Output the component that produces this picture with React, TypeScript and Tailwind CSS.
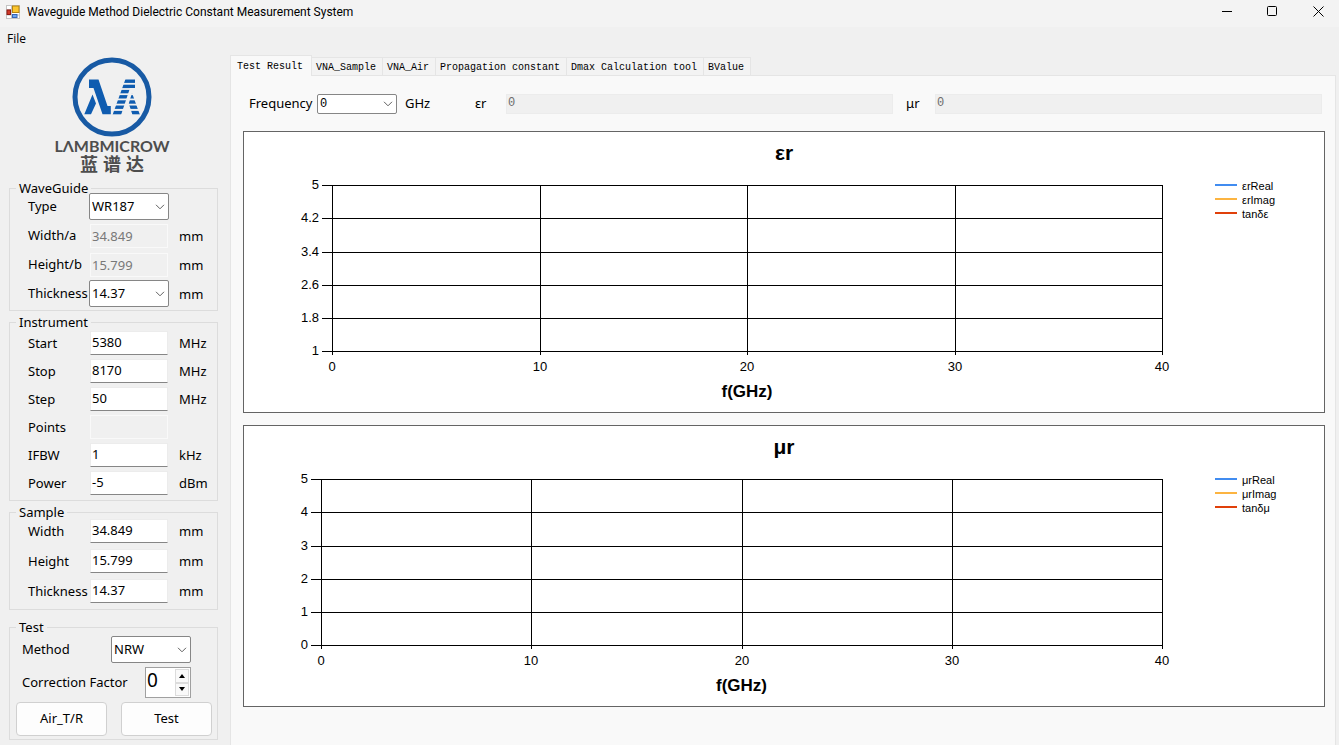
import React from "react";
import type { ReactNode } from "react";

const stripes = [79.5, 84.7, 89.9, 95.1, 100.3, 105.5, 110.9];

function Logo() {
  return (
    <div className="flex flex-col items-center text-[#4d4d4d]">
      <svg width="80" height="80" viewBox="72 57 80 80" role="img" aria-label="Lambmicrow">
        <defs>
          <clipPath id="right-mark">
            <path d="M125.5 79H135V88H130L121 115H112.5Z M132 93L140 115H132.5L128.8 103.5Z" />
          </clipPath>
        </defs>
        <circle cx="112" cy="97" r="37" fill="none" stroke="#185aa4" strokeWidth="5" />
        <path
          d="M89 79.5H98.5L107.5 106H110.8V114.3H102.5L93.5 88H89Z M92.5 94.5L96 103.5L91 114.3H84.3Z"
          fill="#0f5cb0"
        />
        <g clipPath="url(#right-mark)" fill="#0f5cb0">
          {stripes.map((y) => (
            <rect key={y} x="110" y={y} width="32" height="3.4" />
          ))}
        </g>
      </svg>
      <div className="font-['Lato'] text-[16px] font-bold leading-[18px]">LΛMBMICROW</div>
      <div className="mt-px flex gap-[5px] font-['Liberation_Sans','Noto_Sans_CJK_SC',sans-serif] text-[18px] font-bold leading-[18px]">
        <span>蓝</span>
        <span>谱</span>
        <span>达</span>
      </div>
    </div>
  );
}

function Group({ title, className, children }: { title: string; className: string; children: ReactNode }) {
  return (
    <fieldset className={`min-w-0 border border-[#dcdcdc] ${className}`}>
      <legend className="ml-[6px] px-[3px] text-[13px] leading-[8px]">{title}</legend>
      {children}
    </fieldset>
  );
}

function Combo({ id, value, className }: { id: string; value: string; className: string }) {
  return (
    <div className={`relative ${className}`}>
      <select
        id={id}
        defaultValue={value}
        className="h-full w-full appearance-none rounded-[2px] border border-[#868686] bg-white pl-[2px]"
      >
        <option>{value}</option>
      </select>
      <svg
        width="10"
        height="6"
        viewBox="0 0 10 6"
        className="pointer-events-none absolute right-1 top-1/2 -translate-y-1/2"
        aria-hidden="true"
      >
        <path d="M1 0.8L5 4.8L9 0.8" fill="none" stroke="#606060" />
      </svg>
    </div>
  );
}

type RowData = { label: string; value: string; unit?: string; kind?: "select" | "disabled" };

function Row({ group, row, className }: { group: string; row: RowData; className: string }) {
  const id = `${group}-${row.label.replace("/", "-")}`.toLowerCase();
  return (
    <div className={`grid grid-cols-[61px_80px_1fr] items-center pl-[18px] ${className}`}>
      <label htmlFor={id} className="whitespace-nowrap pt-px">
        {row.label}
      </label>
      {row.kind === "select" ? (
        <Combo id={id} value={row.value} className="h-[27px]" />
      ) : row.kind === "disabled" ? (
        <input
          id={id}
          disabled
          defaultValue={row.value}
          className="mx-px h-6 min-w-0 border border-[#f9f9f9] bg-[#f0f0f0] pl-px text-[#787878]"
        />
      ) : (
        <input
          id={id}
          defaultValue={row.value}
          className="mx-px h-6 min-w-0 border border-[#ececec] border-b-[#868686] bg-white pb-[2px] pl-px"
        />
      )}
      <span className="pl-[10px] pt-[2px]">{row.unit}</span>
    </div>
  );
}

const waveguide: RowData[] = [
  { label: "Type", value: "WR187", kind: "select" },
  { label: "Width/a", value: "34.849", unit: "mm", kind: "disabled" },
  { label: "Height/b", value: "15.799", unit: "mm", kind: "disabled" },
  { label: "Thickness", value: "14.37", unit: "mm", kind: "select" },
];

const instrument: RowData[] = [
  { label: "Start", value: "5380", unit: "MHz" },
  { label: "Stop", value: "8170", unit: "MHz" },
  { label: "Step", value: "50", unit: "MHz" },
  { label: "Points", value: "", kind: "disabled" },
  { label: "IFBW", value: "1", unit: "kHz" },
  { label: "Power", value: "-5", unit: "dBm" },
];

const sample: RowData[] = [
  { label: "Width", value: "34.849", unit: "mm" },
  { label: "Height", value: "15.799", unit: "mm" },
  { label: "Thickness", value: "14.37", unit: "mm" },
];

const buttonStyle = "h-[34px] rounded-[4px] border border-[#d0d0d0] bg-[#fdfdfd]";
const stepStyle = "flex flex-1 items-center justify-center border border-[#dcdcdc] bg-[#f9f9f9]";

function Sidebar() {
  return (
    <aside className="flex w-[230px] shrink-0 flex-col pl-[9px] pr-3 pt-[7px]">
      <div className="pr-[3px]">
        <Logo />
      </div>
      <Group title="WaveGuide" className="mt-[10px] pb-[2px]">
        {waveguide.map((row) => (
          <Row key={row.label} group="waveguide" row={row} className="h-[29px]" />
        ))}
      </Group>
      <Group title="Instrument" className="mt-[7px] pb-[3px] pt-[3px]">
        {instrument.map((row) => (
          <Row key={row.label} group="instrument" row={row} className="h-7" />
        ))}
      </Group>
      <Group title="Sample" className="mt-[7px] pb-[3px]">
        {sample.map((row) => (
          <Row key={row.label} group="sample" row={row} className="h-[30px]" />
        ))}
      </Group>
      <Group title="Test" className="mt-[13px] pb-[3px]">
        <div className="flex flex-col gap-1 pt-[5px]">
          <div className="flex items-center justify-between pl-3 pr-[26px]">
            <label htmlFor="method">Method</label>
            <Combo id="method" value="NRW" className="h-[27px] w-20" />
          </div>
          <div className="flex items-center justify-between pl-3 pr-[26px]">
            <label htmlFor="correction">Correction Factor</label>
            <div className="flex h-[31px] w-[46px] border border-[#a0a0a0] bg-white">
              <input id="correction" defaultValue="0" className="min-w-0 flex-1 pb-[5px] pl-px text-[19px]" />
              <div className="flex w-[15px] flex-col py-px pr-px">
                <button aria-label="Increase" className={stepStyle}>
                  <svg width="6" height="4" viewBox="0 0 6 4"><path d="M3 0L6 4H0Z" /></svg>
                </button>
                <button aria-label="Decrease" className={stepStyle}>
                  <svg width="6" height="4" viewBox="0 0 6 4"><path d="M3 4L0 0H6Z" /></svg>
                </button>
              </div>
            </div>
          </div>
          <div className="grid grid-cols-2 gap-[14px] pl-[6px] pr-[5px]">
            <button className={buttonStyle}>Air_T/R</button>
            <button className={buttonStyle}>Test</button>
          </div>
        </div>
      </Group>
    </aside>
  );
}

type ChartProps = { title: string; left: number; yLabels: string[]; legend: string[]; columns: number[] };

const right = 918;
const gridRows = [53, 86, 120, 153, 186, 219];
const legendColors = ["#418cf0", "#fcb441", "#e0400a"];

function Chart({ title, left, yLabels, legend, columns }: ChartProps) {
  const middle = (left + right) / 2;
  return (
    <figure className="border border-[#646464] bg-white">
      <svg viewBox="0 0 1080 280" className="block w-full font-['Liberation_Sans',sans-serif]" role="img" aria-label={title}>
        <text x="540" y="28" textAnchor="middle" fontSize="21" fontWeight="bold">
          {title}
        </text>
        <g fill="#000" shapeRendering="crispEdges">
          {gridRows.map((y) => (
            <rect key={y} x={left - 10} y={y} width={right - left + 11} height="1" />
          ))}
          {columns.map((x) => (
            <rect key={x} x={x} y="53" width="1" height="170" />
          ))}
        </g>
        <g fontSize="13" textAnchor="end">
          {gridRows.map((y, i) => (
            <text key={y} x={left - 13} y={y + 4}>
              {yLabels[i]}
            </text>
          ))}
        </g>
        <g fontSize="13" textAnchor="middle">
          {columns.map((x, i) => (
            <text key={x} x={x} y="239">
              {i * 10}
            </text>
          ))}
        </g>
        <text x={middle} y="265" textAnchor="middle" fontSize="17" fontWeight="bold">
          f(GHz)
        </text>
        {legend.map((name, i) => (
          <g key={name}>
            <rect x="971" y={52 + i * 14} width="22" height="2" fill={legendColors[i]} />
            <text x="998" y={58 + i * 14} fontSize="11">
              {name}
            </text>
          </g>
        ))}
      </svg>
    </figure>
  );
}

const tabs = ["VNA_Sample", "VNA_Air", "Propagation constant", "Dmax Calculation tool", "BValue"];
const readout =
  "h-5 min-w-0 flex-1 border border-[#ececec] bg-[#f0f0f0] pb-[2px] pl-px font-['Liberation_Mono',monospace] text-[12px] text-[#6d6d6d]";

function Results() {
  return (
    <main className="flex min-w-0 flex-1 flex-col pr-[3px] pt-[5px]">
      <div role="tablist" className="flex items-end font-['Liberation_Mono',monospace] text-[10px]">
        <button role="tab" aria-selected="true" className="relative z-10 -mb-px h-[21px] border border-b-0 border-[#e5e5e5] bg-[#f9f9f9] pl-[6px] pr-[8px]">
          Test Result
        </button>
        {tabs.map((tab) => (
          <button key={tab} role="tab" aria-selected="false" className="h-[18px] border border-b-0 border-l-0 border-[#e5e5e5] bg-[#f3f3f3] pl-1 pr-[6px] pt-px">
            {tab}
          </button>
        ))}
      </div>
      <section className="flex flex-1 flex-col border border-[#e5e5e5] bg-[#f9f9f9] pb-[38px] pl-3 pr-[10px] pt-[18px]">
        <div className="flex h-5 items-center pl-[6px] pr-[3px]">
          <label htmlFor="frequency" className="w-[68px]">
            Frequency
          </label>
          <Combo id="frequency" value="0" className="h-5 w-20 font-['Liberation_Mono',monospace] text-[12px]" />
          <span className="w-[78px] pl-2">GHz</span>
          <label htmlFor="epsilon" className="w-[31px]">
            εr
          </label>
          <input id="epsilon" disabled defaultValue="0" className={readout} />
          <label htmlFor="mu" className="w-[42px] pl-[13px]">
            μr
          </label>
          <input id="mu" disabled defaultValue="0" className={readout} />
        </div>
        <div className="mt-[17px] flex flex-col gap-3">
          <Chart
            title="εr"
            left={88}
            columns={[88, 296, 503, 711, 918]}
            yLabels={["5", "4.2", "3.4", "2.6", "1.8", "1"]}
            legend={["εrReal", "εrImag", "tanδε"]}
          />
          <Chart
            title="μr"
            left={77}
            columns={[77, 287, 498, 708, 918]}
            yLabels={["5", "4", "3", "2", "1", "0"]}
            legend={["μrReal", "μrImag", "tanδμ"]}
          />
        </div>
      </section>
    </main>
  );
}

function AppIcon() {
  return (
    <svg width="14" height="14" viewBox="0 0 14 14" aria-hidden="true">
      <rect x="0.5" y="0.5" width="13" height="13" fill="#fff" stroke="#c4c4c4" />
      <path d="M5.5 0.5V13.5M0.5 4.5H5.5M0.5 10H13.5" stroke="#c4c4c4" />
      <rect x="6.5" y="1" width="6.5" height="6.5" fill="#fbc62f" stroke="#b48410" />
      <rect x="1" y="5" width="3.5" height="4.5" fill="#d03a2a" stroke="#8e1a12" />
      <rect x="6.5" y="9.5" width="4.5" height="3" fill="#6ea5f0" stroke="#3566b8" />
    </svg>
  );
}

const windowButton = "flex h-6 items-center justify-center pl-1";

export default function App() {
  return (
    <div className="flex min-h-screen flex-col bg-[#f0f0f0] font-['Noto_Sans',sans-serif] text-[13px] text-black">
      <header className="flex h-[27px] items-center bg-[#f3f3f3] pb-[3px] pl-[6px]">
        <AppIcon />
        <h1 className="flex-1 pl-[7px] font-['Roboto',sans-serif] text-[12px]">
          Waveguide Method Dielectric Constant Measurement System
        </h1>
        <div className="flex pb-px">
          <button aria-label="Minimize" className={`${windowButton} w-[46px]`}>
            <svg width="11" height="11" viewBox="0 0 11 11"><path d="M0 5.5H10" stroke="#000" /></svg>
          </button>
          <button aria-label="Maximize" className={`${windowButton} w-[45px]`}>
            <svg width="11" height="11" viewBox="0 0 11 11"><rect x="0.5" y="0.5" width="9" height="9" rx="1" fill="none" stroke="#000" /></svg>
          </button>
          <button aria-label="Close" className={`${windowButton} w-[46px]`}>
            <svg width="11" height="11" viewBox="0 0 11 11"><path d="M0.5 0.5L10.5 10.5M10.5 0.5L0.5 10.5" stroke="#000" /></svg>
          </button>
        </div>
      </header>
      <nav className="flex h-[23px] items-center pl-[7px]">
        <button className="font-['Open_Sans',sans-serif] text-[12px]">File</button>
      </nav>
      <div className="flex flex-1">
        <Sidebar />
        <Results />
      </div>
    </div>
  );
}
